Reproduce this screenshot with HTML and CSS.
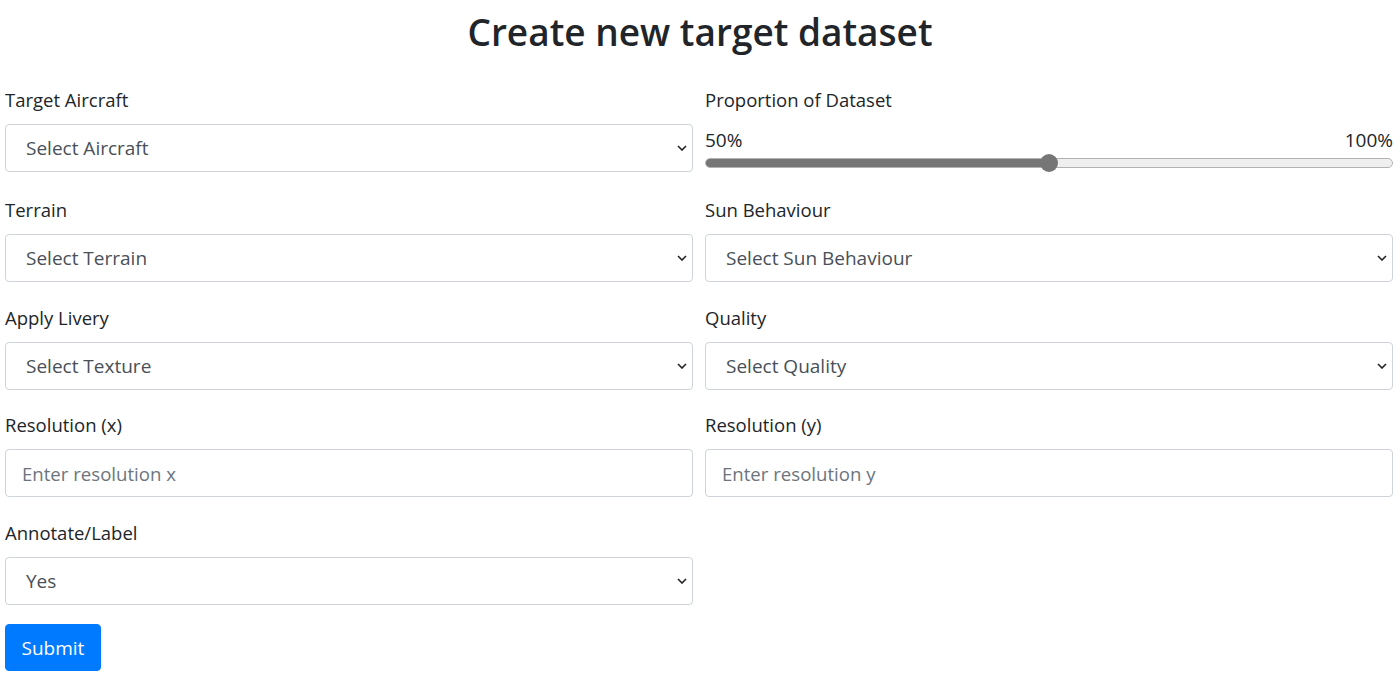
FILE: index.html
```html
<!DOCTYPE html>
<html lang="en">
<head>
    <meta charset="UTF-8">
    <meta name="viewport" content="width=device-width, initial-scale=1.0">
    <title>Create new target dataset</title>
    <link rel="stylesheet" href="styles.css">
</head>
<body>

    <h1 class="page-title">Create new target dataset</h1>

    <form class="dataset-form">
        <div class="form-grid">
            <div class="form-group">
                <label for="aircraft">Target Aircraft</label>
                <div class="select-wrap">
                    <select id="aircraft" class="form-control">
                        <option value="">Select Aircraft</option>
                    </select>
                    <svg class="chevron" width="10" height="6" viewBox="0 0 10 6"><polyline points="1,1 5,5 9,1" /></svg>
                </div>
            </div>

            <div class="form-group">
                <label for="proportion">Proportion of Dataset</label>
                <div class="range-labels">
                    <span>50%</span>
                    <span>100%</span>
                </div>
                <input type="range" id="proportion" class="range" min="50" max="100" value="75">
            </div>

            <div class="form-group">
                <label for="terrain">Terrain</label>
                <div class="select-wrap">
                    <select id="terrain" class="form-control">
                        <option value="">Select Terrain</option>
                    </select>
                    <svg class="chevron" width="10" height="6" viewBox="0 0 10 6"><polyline points="1,1 5,5 9,1" /></svg>
                </div>
            </div>

            <div class="form-group">
                <label for="sun">Sun Behaviour</label>
                <div class="select-wrap">
                    <select id="sun" class="form-control">
                        <option value="">Select Sun Behaviour</option>
                    </select>
                    <svg class="chevron" width="10" height="6" viewBox="0 0 10 6"><polyline points="1,1 5,5 9,1" /></svg>
                </div>
            </div>

            <div class="form-group">
                <label for="livery">Apply Livery</label>
                <div class="select-wrap">
                    <select id="livery" class="form-control">
                        <option value="">Select Texture</option>
                    </select>
                    <svg class="chevron" width="10" height="6" viewBox="0 0 10 6"><polyline points="1,1 5,5 9,1" /></svg>
                </div>
            </div>

            <div class="form-group">
                <label for="quality">Quality</label>
                <div class="select-wrap">
                    <select id="quality" class="form-control">
                        <option value="">Select Quality</option>
                    </select>
                    <svg class="chevron" width="10" height="6" viewBox="0 0 10 6"><polyline points="1,1 5,5 9,1" /></svg>
                </div>
            </div>

            <div class="form-group">
                <label for="resX">Resolution (x)</label>
                <input type="number" id="resX" class="form-control text-input" placeholder="Enter resolution x">
            </div>

            <div class="form-group">
                <label for="resY">Resolution (y)</label>
                <input type="number" id="resY" class="form-control text-input" placeholder="Enter resolution y">
            </div>

            <div class="form-group">
                <label for="annotate">Annotate/Label</label>
                <div class="select-wrap">
                    <select id="annotate" class="form-control">
                        <option value="yes">Yes</option>
                        <option value="no">No</option>
                    </select>
                    <svg class="chevron" width="10" height="6" viewBox="0 0 10 6"><polyline points="1,1 5,5 9,1" /></svg>
                </div>
            </div>
        </div>

        <button type="submit" class="btn-submit">Submit</button>
    </form>

</body>
</html>
```

FILE: styles.css
```css
body {
    margin: 0;
    font-family: "Open Sans", "Noto Sans", sans-serif;
    color: #212529;
    background: #fff;
}
.page-title {
    margin: 0;
    padding: 8px 0 0;
    font-size: 37px;
    font-weight: 600;
    line-height: 48px;
    text-align: center;
}
.dataset-form {
    padding: 32px 7px 0 5px;
}
.form-grid {
    display: grid;
    grid-template-columns: 1fr 1fr;
    column-gap: 12px;
    row-gap: 23.5px;
}
.form-group label {
    display: block;
    font-size: 18.5px;
    line-height: 24px;
    margin-bottom: 12px;
}
.select-wrap {
    position: relative;
}
.form-control {
    display: block;
    width: 100%;
    height: 48px;
    box-sizing: border-box;
    padding: 0 16px 0 20px;
    font-family: inherit;
    font-size: 19px;
    color: #495057;
    background: #fff;
    border: 1px solid #ced4da;
    border-radius: 4px;
    appearance: none;
    -webkit-appearance: none;
    outline: none;
}
.text-input {
    padding-left: 16px;
    font-size: 18.6px;
    -moz-appearance: textfield;
}
.text-input::placeholder {
    color: #6c757d;
}
.text-input::-webkit-outer-spin-button,
.text-input::-webkit-inner-spin-button {
    -webkit-appearance: none;
    margin: 0;
}
.chevron {
    position: absolute;
    right: 6px;
    top: 21px;
    fill: none;
    stroke: #222;
    stroke-width: 1.6;
}
.range-labels {
    display: flex;
    justify-content: space-between;
    margin-top: 16px;
    font-size: 19px;
    line-height: 24px;
}
.range {
    display: block;
    width: 100%;
    height: 22.5px;
    margin: 0;
    background: transparent;
    -webkit-appearance: none;
    appearance: none;
}
.range::-webkit-slider-runnable-track {
    height: 10px;
    box-sizing: border-box;
    border: 1px solid #b2b2b2;
    border-radius: 5px;
    background: linear-gradient(to right, #767676 50%, #efefef 50%);
}
.range::-webkit-slider-thumb {
    -webkit-appearance: none;
    width: 18px;
    height: 18px;
    margin-top: -5px;
    border: none;
    border-radius: 50%;
    background: #767676;
}
.btn-submit {
    margin-top: 19.5px;
    height: 47px;
    padding: 0 15.5px;
    font-family: inherit;
    font-size: 19px;
    color: #fff;
    background: #007bff;
    border: 1px solid #007bff;
    border-radius: 4px;
    cursor: pointer;
}
```
